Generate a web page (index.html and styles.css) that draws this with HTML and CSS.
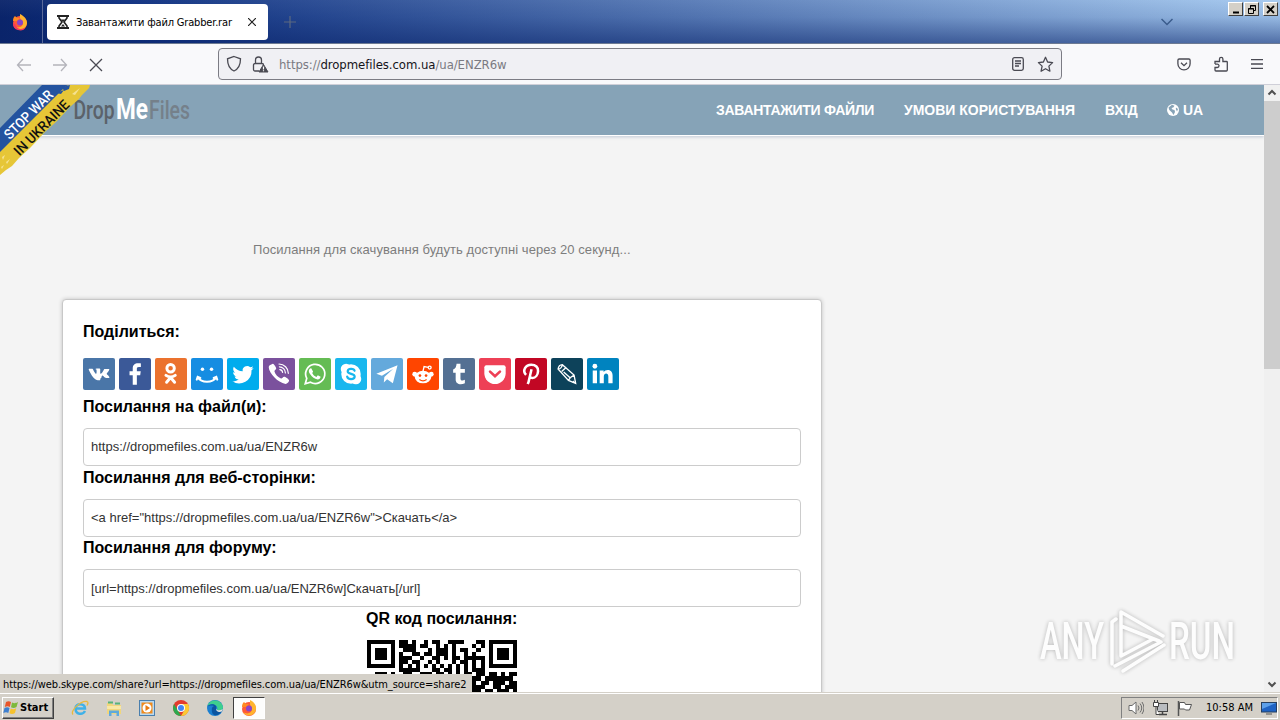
FILE: index.html
```html
<!DOCTYPE html>
<html lang="uk">

<head>
  <meta charset="UTF-8">
  <title>Завантажити файл Grabber.rar</title>
  <link rel="stylesheet" href="styles.css">
</head>

<body>

  <!-- Tab strip -->
  <div class="tabbar">
    <div class="pinned">
      <svg width="18" height="18" viewBox="0 0 18 18">
        <circle cx="9" cy="10" r="7" fill="#ff5a36"/>
        <path d="M9 1c4 2 7 5 7 9a7 7 0 0 1-13 3c4 3 9 1 9-3 0-3-2-3-3-5z" fill="#ffb42e"/>
        <path d="M2 8c0-3 1-4 2-5l2 2 3 0-3 3z" fill="#ff8a22"/>
        <circle cx="9" cy="9.500" r="3" fill="#8a45c8"/>
        <path d="M2 10a7 7 0 0 0 13 4c-4 3-9 3-11-3z" fill="#f33a5b"/>
      </svg>
    </div>
    <div class="tab">
      <svg width="12" height="14" viewBox="0 0 12 14">
        <path d="M0 1h12M0 13h12" stroke="#222" stroke-width="2"/>
        <path d="M2 1v2l3 4-3 4v2M10 1v2L7 7l3 4v2" fill="none" stroke="#222" stroke-width="1.600"/>
        <path d="M4 4.500h4L6 7zM6 9l2 2.500H4z" fill="#222"/>
      </svg>
      <span class="tab-title">Завантажити файл Grabber.rar</span>
      <svg class="tab-close" width="8" height="8" viewBox="0 0 8 8"><path d="M0 0l8 8M8 0L0 8" stroke="#222" stroke-width="1.200"/></svg>
    </div>
    <svg class="newtab" width="12" height="12" viewBox="0 0 12 12"><path d="M6 0v12M0 6h12" stroke="#5c6980" stroke-width="1.200"/></svg>
    <svg class="alltabs" width="12" height="8" viewBox="0 0 12 8"><path d="M0.500 1l5.500 5.500L11.500 1" fill="none" stroke="#3b5c8c" stroke-width="1.500"/></svg>
    <div class="winbtns">
      <span><svg width="14" height="13"><path d="M4 9.500h6" stroke="#000" stroke-width="2"/></svg></span>
      <span><svg width="14" height="13" fill="none" stroke="#000"><path d="M5.500 5V2.500h5v5H8M5 3h6M3.500 5.500h5v5h-5zM3 6h6"/></svg></span>
      <span class="last"><svg width="13" height="13"><path d="M3 3l7 7M10 3l-7 7" stroke="#000" stroke-width="1.800"/></svg></span>
    </div>
  </div>

  <!-- Toolbar -->
  <div class="toolbar">
    <div class="navbtns">
      <svg width="16" height="14" viewBox="0 0 16 14"><path d="M15 7H1.500M7 1L1.500 7 7 13" class="off"/></svg>
      <svg width="16" height="14" viewBox="0 0 16 14"><path d="M1 7h13.500M9 1l5.500 6L9 13" class="off"/></svg>
      <svg class="stop" width="14" height="14" viewBox="0 0 14 14"><path d="M1 1l12 12M13 1L1 13" class="on"/></svg>
    </div>
    <div class="urlbar">
      <svg width="16" height="18" viewBox="0 0 16 18"><path d="M8 1.500l6.500 2.300c0 6-1.500 10-6.500 12.200C3 13.800 1.500 9.800 1.500 3.800z" class="on"/></svg>
      <svg class="lock" width="17" height="17" viewBox="0 0 17 17">
        <path d="M7 15H3a1.500 1.500 0 0 1-1.500-1.500V9A1.500 1.500 0 0 1 3 7.500h7A1.500 1.500 0 0 1 11.500 9M3.500 7.500V4a3 3 0 0 1 6 0v3.500" class="on"/>
        <path d="M11.500 8.500L16 16H7z" fill="#4a4a53" stroke="#4a4a53"/>
        <path d="M11.500 10.500v3M11.500 14.300v1" stroke="#fff" stroke-width="1.200"/>
      </svg>
      <span class="url">https://<b>dropmefiles.com.ua</b>/ua/ENZR6w</span>
      <svg class="reader" width="12" height="14" viewBox="0 0 12 14"><rect x="0.700" y="0.700" width="10.600" height="12.600" rx="1.800" class="on"/><path d="M3 4h6M3 6.500h6M3 9h4" class="on"/></svg>
      <svg width="17" height="17" viewBox="0 0 17 17"><path d="M8.500 1.300l2.100 4.700 5 .6-3.700 3.500 1 5.100-4.400-2.500-4.400 2.500 1-5.100L1.400 6.600l5-.6z" class="on" stroke-linejoin="round"/></svg>
    </div>
    <div class="tools">
      <svg width="14" height="13" viewBox="0 0 14 13"><path d="M2.200 1h9.600a1.300 1.300 0 0 1 1.300 1.300v3.500a6 6 0 0 1-12.200 0V2.300A1.300 1.300 0 0 1 2.200 1zM4 4.800l3 2.900 3-2.900" class="on"/></svg>
      <svg width="14" height="16" viewBox="0 0 14 16"><path d="M1 8V5.500h4.500V3a1.700 1.700 0 0 1 3.400 0v2.500h3.600a.8.800 0 0 1 .8.800V14a1 1 0 0 1-1 1H2a1 1 0 0 1-1-1v-2.500h2.300a1.700 1.700 0 0 0 0-3.400H1" class="on"/></svg>
      <svg width="12" height="10" viewBox="0 0 12 10"><path d="M0 .6h12M0 5h12M0 9.400h12" class="on"/></svg>
    </div>
  </div>

  <!-- Page -->
  <div class="viewport">
    <div class="page">
      <header>
        <svg class="logo" width="124" height="34" viewBox="0 0 124 34">
          <g font-family="Roboto, sans-serif">
            <text x="3.500" y="25" font-size="25" font-weight="500" fill="#5b626a" textLength="41" lengthAdjust="spacingAndGlyphs">Drop</text>
            <text x="46" y="25" font-size="29" font-weight="700" fill="#fff" textLength="32" lengthAdjust="spacingAndGlyphs">Me</text>
            <text x="79" y="25" font-size="25" font-weight="500" fill="#75808a" textLength="41" lengthAdjust="spacingAndGlyphs">Files</text>
          </g>
        </svg>
        <nav>
          <a class="n1">ЗАВАНТАЖИТИ ФАЙЛИ</a>
          <a class="n2">УМОВИ КОРИСТУВАННЯ</a>
          <a class="n3">ВХІД</a>
          <a class="n4"><svg width="12" height="12" viewBox="0 0 12 12"><circle cx="6" cy="6" r="6" fill="#fff"/><path d="M5 .8l2.500 1L6.300 3.500 4.500 4l1 1.500 2 .5.500 2L6.500 11 5 8.500 2.300 6 1.500 3.500zM9 3.500l2 1.500-1 2.500L8.800 5z" fill="#86a3b7"/></svg>UA</a>
        </nav>
      </header>

      <svg class="ribbon" width="92" height="90" viewBox="0 0 92 90">
        <path d="M42 0H68L0 68V43z" fill="#24539f"/>
        <path d="M66 1l4-1h20l-1 3-7 7-3 4-9 8-13 14-12 11-15 16-11 10-7 8-6 4-6 5V67z" fill="#e6c637"/>
        <path d="M62 2l8-2-1 4-5 2zM56 8l8-3-3 4z" fill="#24539f"/>
        <path d="M2 72l3-2-2 5zM6 77l4-3-3 5zM1 82l3-2-2 4zM72 9l8-6-5 7z" fill="#f5e292"/>
        <g font-family="Roboto, sans-serif" font-size="14" font-weight="700" text-anchor="middle">
          <text transform="translate(32 33) rotate(-45)" fill="#fff" font-weight="500" textLength="63" lengthAdjust="spacingAndGlyphs">STOP WAR</text>
          <text transform="translate(45 46) rotate(-45)" fill="#111" font-weight="500" textLength="72" lengthAdjust="spacingAndGlyphs">IN UKRAINE</text>
        </g>
      </svg>

      <p class="countdown">Посилання для скачування будуть доступні через 20 секунд...</p>

      <section class="card">
        <h4 class="first">Поділиться:</h4>
        <div class="share">
          <svg class="vk" viewBox="0 0 24 24"><path d="M12.800 16.700h-.9s-2 .2-3.800-1.700C6.100 12.900 4.300 8.700 4.300 8.700s-.1-.3 0-.4c.1-.2.500-.2.500-.2l2.100 0s.2 0 .4.100c.1.100.2.300.2.300s.4.900.8 1.600c.9 1.500 1.300 1.900 1.600 1.700.4-.2.300-2.100.3-2.100s0-.7-.2-1c-.2-.2-.5-.3-.7-.3-.1 0 .1-.3.300-.4.400-.2 1-.2 1.800-.2.600 0 .8 0 1 .1.800.2.500.9.500 2.500 0 .5-.1 1.200.3 1.500.2.100.6 0 1.700-1.700.5-.8.900-1.800.9-1.800s.1-.2.200-.2h2.900s.7-.1.800.2c.1.300-.2 1-.9 2-1.200 1.600-1.400 1.500-.3 2.400 1 .9 1.200 1.400 1.200 1.400.4.700-.4.800-.4.800l-1.900 0s-.4.100-1-.3c-.7-.5-1.400-1.800-2-1.600-.5.200-.5 1.400-.5 1.400s0 .2-.2.400c-.2.200-.5.200-.5.200z"/></svg>
          <svg class="fb" viewBox="0 0 24 24"><path d="M13.400 20v-7.100h2.500l.4-3h-2.900V8.200c0-.8.300-1.400 1.500-1.400h1.500V4.100C16.100 4.100 15.200 4 14.200 4 12 4 10.300 5.300 10.300 7.800v2.100H7.900v3h2.400V20z"/></svg>
          <svg class="ok" viewBox="0 0 24 24"><g fill="none" stroke="#fff" stroke-width="2.200" stroke-linecap="round"><circle cx="11.700" cy="7.700" r="2.800"/><path d="M8.200 13c2 1.500 5 1.500 7 0M11.700 14.600l-3 3.600M11.700 14.600l3 3.600"/></g></svg>
          <svg class="mm" viewBox="0 0 24 24"><circle cx="8.600" cy="8.500" r="1.300"/><circle cx="15.400" cy="8.500" r="1.300"/><path d="M5 14.500c3 4.300 11 4.300 14 0M4.300 16.200l.7-2 2 .8M19.700 16.200l-.7-2-2 .8" fill="none" stroke="#fff" stroke-width="1.500" stroke-linecap="round"/></svg>
          <svg class="tw" viewBox="0 0 24 24"><path d="M20 7.500c-.6.300-1.200.4-1.900.5.700-.4 1.200-1 1.400-1.800-.6.400-1.300.6-2.100.8a3.300 3.300 0 0 0-5.600 3C9.100 9.900 6.700 8.600 5.100 6.600c-.9 1.500-.4 3.400 1 4.400-.5 0-1-.2-1.500-.4 0 1.600 1.100 2.900 2.600 3.200-.5.100-1 .2-1.500.1.400 1.300 1.600 2.200 3.100 2.300A6.600 6.600 0 0 1 4 17.500a9.300 9.300 0 0 0 14.400-8.300c.6-.5 1.200-1 1.600-1.700z"/></svg>
          <svg class="vb" viewBox="0 0 24 24"><path d="M5 5.500l2.400-1.200c1 .5 2.600 2.700 2.500 3.600 0 1-1.600 1.400-1.300 2.300.7 2.200 2.600 4.500 4.900 5.200 1 .2 1.300-1.300 2.300-1.300 1 0 3.300 1.600 3.700 2.600.3.900-1.300 2.800-2.600 2.800C11 18.500 4.600 11.500 4.300 7c0-.6.200-1.100.7-1.500z"/><path d="M12 4.500a7 7 0 0 1 7 7M12.300 6.600a4.700 4.700 0 0 1 4.500 4.600M12.600 8.700c1.300.1 2 .9 2.100 2.100" fill="none" stroke="#fff" stroke-width=".9" stroke-linecap="round"/></svg>
          <svg class="wa" viewBox="0 0 24 24"><path d="M4.700 19.300l1.100-4a7.200 7.200 0 1 1 2.800 2.900z" fill="none" stroke="#fff" stroke-width="1.300"/><path d="M9.300 7.800c-.3-.2-1-.1-1.400.4-1 1.200-.4 2.800.5 4 1.500 2.100 3.200 3.500 5.500 3.900 1.100.1 2.200-.7 2.300-2l-2.100-1.100-1 1.200c-1.500-.5-2.500-1.500-3.200-2.900l.7-1z"/></svg>
          <svg class="sk" viewBox="0 0 24 24"><circle cx="12" cy="12" r="7.300"/><circle cx="8.300" cy="8.300" r="4"/><circle cx="15.700" cy="15.700" r="4"/><path d="M14.700 9.600C14.200 7.600 9.600 7.700 9.500 9.900c-.1 2.500 5.400 1.500 5.300 4.100-.2 2.500-5.300 2.400-5.700-.1" fill="none" stroke="#18b7ee" stroke-width="1.600" stroke-linecap="round"/></svg>
          <svg class="tg" viewBox="0 0 24 24"><path d="M19.900 5.500L4 11.800l4.200 1.500 8.500-5.200-6.700 6.200-.4 4 2.500-2.300 4.300 3z"/></svg>
          <svg class="rd" viewBox="0 0 24 24"><ellipse cx="12" cy="14.300" rx="6.200" ry="4.700"/><circle cx="5.800" cy="12.200" r="1.800"/><circle cx="18.200" cy="12.200" r="1.800"/><path d="M12 10l.8-3.600 3.200.6" fill="none" stroke="#fff"/><circle cx="17" cy="7.200" r="1.100" fill="none" stroke="#fff"/><g fill="#ff4500"><circle cx="9.700" cy="13.200" r="1"/><circle cx="14.300" cy="13.200" r="1"/></g><path d="M9.300 16.200c1.500 1.100 3.900 1.100 5.400 0" fill="none" stroke="#ff4500" stroke-width=".9"/></svg>
          <svg class="tm" viewBox="0 0 24 24"><path d="M10.200 4.300h2.900v4h3.300v2.800h-3.300v4.200c0 1.600 1.300 1.900 3.300 1v2.700c-3.200 1.500-6.900.8-6.900-2.800v-5.100H7.600V8.700c1.600-.6 2.300-1.700 2.600-4.400z"/></svg>
          <svg class="pk" viewBox="0 0 24 24"><path d="M5.500 5.500h13A1.600 1.600 0 0 1 20 7v4.500a8 8 0 0 1-16 0V7a1.600 1.600 0 0 1 1.500-1.500z"/><path d="M8.300 10.200l3.700 3.500 3.700-3.500" fill="none" stroke="#ee4056" stroke-width="2" stroke-linecap="round"/></svg>
          <svg class="pn" viewBox="0 0 24 24"><path d="M8.300 12.700C5.200 9.500 8 5 12.200 5c3.300 0 5.300 2 5.100 4.800-.2 3-2 5.200-4.200 5.200-1 0-1.600-.5-1.800-1.100M12.400 8.500l-2.300 9.800-.6 1.200" fill="none" stroke="#fff" stroke-width="1.900"/></svg>
          <svg class="lj" viewBox="0 0 24 24"><path d="M5.300 8.300c.3-2 1.400-3.200 3.200-3.300l8.800 7.800 1.200 6.200-5.400-2.200zM5.500 8.300c1.600-.2 2.600-1.500 3-3.200M8 10.200l3.500-3.300M9.500 10.500l5 4.500M13.100 16.800c1-2 2.400-3.200 4.200-4" fill="none" stroke="#fff" stroke-width="1"/><path d="M17 16.800l1.500 2.200-2.800-.8z"/></svg>
          <svg class="li" viewBox="0 0 24 24"><path d="M4.300 9.300h3.200v9.700H4.300zM9.500 9.300h3v1.400c1.300-2.400 6.700-2.500 6.700 2.400V19H16v-5.200c0-3-3.400-2.700-3.400 0V19H9.500z"/><circle cx="5.900" cy="6.200" r="1.800"/></svg>
        </div>
        <h4 class="second">Посилання на файл(и):</h4>
        <div class="field f1">https://dropmefiles.com.ua/ua/ENZR6w</div>
        <h4>Посилання для веб-сторінки:</h4>
        <div class="field f2">&lt;a href="https://dropmefiles.com.ua/ua/ENZR6w"&gt;Скачать&lt;/a&gt;</div>
        <h4 class="forum">Посилання для форуму:</h4>
        <div class="field f3">[url=https://dropmefiles.com.ua/ua/ENZR6w]Скачать[/url]</div>
        <div class="qr">
          <h4>QR код посилання:</h4>
          <svg id="qr" width="150" height="150" viewBox="0 0 37 37" shape-rendering="crispEdges"></svg>
        </div>
      </section>

      <svg class="watermark" width="204" height="72" viewBox="0 0 204 72">
        <g font-family="Roboto, sans-serif" font-size="51" font-weight="500" fill="#fff">
          <text x="3" y="53" textLength="64" lengthAdjust="spacingAndGlyphs">ANY</text>
          <text x="132" y="53" textLength="66" lengthAdjust="spacingAndGlyphs">RUN</text>
        </g>
        <path d="M75 58V16l4-3M84 50V6l42 24M84 20l38 15M84 50l32-17M78 60l46-24M86 65l41-26" fill="none" stroke="#fff" stroke-width="3.500" stroke-linecap="round" stroke-linejoin="round"/>
      </svg>
    </div>
    <div class="scrollbar">
      <svg width="16" height="16" viewBox="0 0 16 16"><path d="M4.500 9.500L8 6l3.500 3.500" fill="none" stroke="#505050" stroke-width="2"/></svg>
      <div class="thumb"></div>
      <svg class="down" width="16" height="16" viewBox="0 0 16 16"><path d="M4.500 6.500L8 10l3.500-3.500" fill="none" stroke="#505050" stroke-width="2"/></svg>
    </div>
    <div class="status">https://web.skype.com/share?url=https://dropmefiles.com.ua/ua/ENZR6w&amp;utm_source=share2</div>
  </div>

  <!-- Taskbar -->
  <div class="taskbar">
    <div class="start">
      <svg width="17" height="16" viewBox="0 0 17 16">
        <path d="M3 2c2-1.200 3.500-1 5 0L6.800 7c-1.500-1-3-1-5 0z" fill="#e8552a"/>
        <path d="M9 2.500c2 1 3.500 1 6-.5l-1.500 5c-2 1.300-3.700 1.300-5.500.3z" fill="#7db93b"/>
        <path d="M1.500 8c2-1.200 3.500-1 5 0L5.300 13c-1.500-1-3-1-5 0z" fill="#3d7fd0"/>
        <path d="M7.700 8.500c2 1 3.500 1 5.500-.3L12 13c-2 1.300-3.700 1.300-5.500.3z" fill="#f6c22d"/>
      </svg>
      <span>Start</span>
    </div>
    <div class="quick">
      <svg width="18" height="18" viewBox="0 0 18 18"><path d="M14 12c-2.500 4.500-9.500 3.500-9.500-2.500S14 4 14 9.500H5" fill="none" stroke="#3fb1e8" stroke-width="2.500"/><path d="M2 15.500C-1 12 10 1 16 2.500c1.500.500 1 2.500 0 4" fill="none" stroke="#e9b93c" stroke-width="1.300"/></svg>
      <svg width="18" height="18" viewBox="0 0 18 18"><path d="M2 4h5l1 2h8v9H2z" fill="#f1d67c"/><path d="M3 2.500h5v2H3zM10 3.500h5v2h-5z" fill="#58b37a"/><path d="M2 7h14v3H2z" fill="#f8e7a6"/><path d="M4 17v-5.500h10V17h-2.500v-3h-5v3z" fill="#5ea9dc"/></svg>
      <svg width="18" height="18" viewBox="0 0 18 18"><rect x="1.500" y="1.500" width="15" height="15" fill="#b9d9f1" stroke="#4a7fae"/><rect x="3.500" y="3.500" width="11" height="11" fill="#f08a1c"/><circle cx="9" cy="9" r="4.500" fill="#fff"/><path d="M7.500 6l4.500 3-4.500 3z" fill="#e87a10"/></svg>
      <svg width="18" height="18" viewBox="0 0 18 18"><circle cx="9" cy="9" r="8" fill="#e33b2e"/><path d="M2.100 5l5 8.500L9 17A8 8 0 0 1 2.100 5z" fill="#2da94f"/><path d="M9 5h7A8 8 0 0 1 9 17l3.500-6z" fill="#fcc934"/><circle cx="9" cy="9" r="4" fill="#fff"/><circle cx="9" cy="9" r="3" fill="#4285f4"/></svg>
      <svg width="18" height="18" viewBox="0 0 18 18"><circle cx="9" cy="9" r="8" fill="#1b7fd0"/><path d="M1.500 7C3 0 15-1 17 8c.300 4-5 4-6 2.500C13 7 6 3 1.500 7z" fill="#3ecf8e"/><path d="M1.300 7.500C5 3 12 6 10 9c0 3 3 4 6 3-3 5-9 6-10 1-.500-4 0-5 2-6-3-1-5 0-6.700.500z" fill="#0b54a0"/><path d="M10 9.500c.500 2 4 2.500 6.800.500l-1 2.500c-3 1.200-6 0-5.800-3z" fill="#e6e3dd"/></svg>
      <div class="active">
        <svg width="18" height="18" viewBox="0 0 18 18"><circle cx="9" cy="10" r="7" fill="#ff5a36"/><path d="M10 1c4 2 6.500 5 6 9a7 7 0 0 1-13 3c4 3 9 1 9-3 0-3-2-3-2-5z" fill="#ffb42e"/><path d="M2 8c0-3 1-4 2-5l2 2h3L6 8z" fill="#ff8a22"/><circle cx="9" cy="9.500" r="3" fill="#8a45c8"/></svg>
      </div>
    </div>
    <div class="tray">
      <svg width="16" height="16" viewBox="0 0 16 16" stroke="#6b6b6b"><path d="M1 5.500h3L8 2v12l-4-3.500H1z" fill="#fff"/><path d="M10 5.500q2 2.500 0 5M12 3.500q3.500 4.500 0 9M14 2q4 6 0 12" fill="none"/></svg>
      <svg width="17" height="16" viewBox="0 0 17 16" stroke="#444"><rect x="5.500" y="3.500" width="10" height="8" fill="#b9bcc0"/><path d="M7 14.500h8M10.500 12v2" stroke-width="1.500"/><path d="M1.500 2.500h5v4h-5zM2.500 0v2M5.500 0v2M4 7v7.500h3" fill="#fff"/></svg>
      <svg width="16" height="16" viewBox="0 0 16 16" stroke="#555"><path d="M1.500 1v15" stroke-width="1.500"/><path d="M2.500 2.500h5l1 2h6l-2 5.500h-4l-1-1h-5z" fill="#fff"/></svg>
      <span class="clock">10:58 AM</span>
      <svg width="16" height="14" viewBox="0 0 16 14"><rect x=".5" y="1.500" width="15" height="9.500" fill="#1f63c4" stroke="#274060"/><path d="M1 2h14L1 8z" fill="#5da0ea"/><path d="M5 13h6" stroke="#555"/></svg>
    </div>
  </div>

  <script>
    // first rows of the code, the rest is below the fold
    const rows = [
      "XXXXXXX.XX.X..X.XX..XXXX...XX.XXXXXXX",
      "X.....X.XXXX.XX..X.X.X....X.X.X.....X",
      "X.XXX.X..XXX...X.XXX.X.XX..X..X.XXX.X",
      "X.XXX.X.X..XX.XX.XXX.X..X.X...X.XXX.X",
      "X.XXX.X.XXX..X..XX.X.XX.XXXXX.X.XXX.X",
      "X.....X.XX.XX..X.X...X.XX.X.X.X.....X",
      "XXXXXXX.X.X.X.X.X.X.X.X.X.X.X.XXXXXXX",
      "........XXXXX...XX.XX.X.X.XXX........",
      "..XXX.X..XX..XXX.XX.X.X.XX.XX.XX.X.XX",
      "X.X..X...XX.X..X.XX..X...XXX.XXXXXXX.",
      "..XX.XX.X...XX..XX.X..X.X.X.XX.XXX.XX",
      "X..X.XX.XX.X..X..X.X.X..X.XXX..XX.XXX",
      "XX..X..X..XX.X.XX..X.XX...XX.XX.XXX.X"
    ];
    let cells = '';
    rows.forEach((row, y) => {
      for (let x = 0; x < row.length; x++) {
        if (row[x] === 'X') cells += `<rect x="${x}" y="${y}" width="1" height="1"/>`;
      }
    });
    document.getElementById('qr').innerHTML = cells;
  </script>
</body>

</html>
```
FILE: styles.css
```css
* {
  margin: 0;
  padding: 0;
  box-sizing: border-box;
}

body {
  width: 1280px;
  height: 720px;
  overflow: hidden;
  display: flex;
  flex-direction: column;
  font-family: "Liberation Sans", Arial, sans-serif;
  background: #f4f4f4;
}

svg {
  display: block;
  flex: none;
}

.on,
.off {
  fill: none;
  stroke: #4a4a53;
  stroke-width: 1.3;
}

.off {
  stroke: #b4b4bb;
}

/* Tab strip */
.tabbar {
  position: relative;
  flex: none;
  height: 44px;
  display: flex;
  align-items: center;
  background: linear-gradient(rgba(255, 255, 255, 0.04), rgba(10, 36, 106, 0.1) 40%, rgba(10, 36, 106, 0.55)), linear-gradient(90deg, #0a246a, #0e3080 10%, #a6caf0);
  border-bottom: 1px solid #6d7a92;
}

.pinned {
  width: 43px;
  height: 43px;
  padding: 13px 0 0 11px;
  border-right: 1px solid #5a6a9a;
}

.tab {
  width: 221px;
  height: 36px;
  margin-left: 4px;
  padding-left: 10px;
  display: flex;
  align-items: center;
  background: #fff;
  border-radius: 4px;
}

.tab-title {
  margin-left: 7px;
  width: 158px;
  padding-top: 2px;
  font: 11px "DejaVu Sans Condensed", sans-serif;
  letter-spacing: -0.17px;
  white-space: nowrap;
}

.tab-close {
  margin-left: 14px;
}

.newtab {
  margin-left: 16px;
}

.alltabs {
  margin-left: 865px;
}

.winbtns {
  position: absolute;
  top: 2px;
  right: 2px;
  display: flex;
}

.winbtns span {
  width: 15px;
  height: 14px;
  background: #d4d0c8;
  border: 1px solid;
  border-color: #fff #404040 #404040 #fff;
  margin-right: 1px;
}

.winbtns .last {
  margin: 0 0 0 3px;
}

/* Toolbar */
.toolbar {
  flex: none;
  height: 41px;
  display: flex;
  align-items: center;
  background: #f9f9fb;
  border-bottom: 1px solid #cfcfd8;
}

.navbtns {
  display: flex;
  width: 218px;
  gap: 20px;
  padding: 1px 0 0 16px;
}

.stop {
  margin-left: 1px;
}

.urlbar {
  width: 844px;
  height: 32px;
  padding: 0 7px;
  display: flex;
  align-items: center;
  background: #f0f0f4;
  border: 1px solid #7c7c84;
  border-radius: 4px;
}

.lock {
  margin-left: 10px;
}

.url {
  flex: 1;
  margin-left: 10px;
  font: 13px "DejaVu Sans Condensed", sans-serif;
  letter-spacing: -0.06px;
  color: #7a7a82;
}

.url b {
  font-weight: normal;
  color: #15141a;
}

.reader {
  margin-right: 13px;
}

.tools {
  display: flex;
  align-items: center;
  gap: 23px;
  margin-left: 115px;
}

/* Page */
.viewport {
  position: relative;
  flex: none;
  height: 607px;
  display: flex;
  overflow: hidden;
}

.page {
  position: relative;
  width: 1264px;
  height: 607px;
  overflow: hidden;
}

header {
  height: 51px;
  display: flex;
  background: #86a3b7;
  border-bottom: 1px solid #fff;
  box-shadow: 0 1px 3px rgba(120, 140, 170, 0.4);
}

.logo {
  margin: 9px 0 0 70px;
}

nav {
  display: flex;
  margin-left: 522px;
  gap: 30px;
  line-height: 50px;
  font-size: 14px;
  font-weight: bold;
  color: #fff;
  white-space: nowrap;
}

nav a {
  display: flex;
  align-items: center;
}

.n1 {
  width: 158px;
  letter-spacing: -0.3px;
}

.n2 {
  width: 171px;
}

.n3 {
  width: 32px;
}

.n4 {
  gap: 4px;
}

.ribbon {
  position: absolute;
  top: 0;
  left: 0;
  overflow: visible;
}

.countdown {
  margin: 104px 0 0 253px;
  height: 20px;
  line-height: 20px;
  font-size: 13px;
  letter-spacing: 0.07px;
  color: #7d7d7d;
  white-space: nowrap;
}

.card {
  width: 760px;
  height: 480px;
  margin: 39px 0 0 62px;
  padding: 21px 20px;
  background: #fff;
  border: 1px solid #c8c8c8;
  border-radius: 4px;
  box-shadow: 0 0 4px rgba(0, 0, 0, 0.2);
}

h4 {
  margin: 2px 0 11px;
  line-height: 20px;
  font-size: 16px;
  color: #000;
}

h4.first {
  margin: 1px 0 16px;
}

h4.second {
  margin: 7px 0 11px;
}

h4.forum {
  margin: 1px 0 11px;
}

.share {
  display: flex;
  gap: 4px;
}

.share svg {
  width: 32px;
  height: 32px;
  border-radius: 2px;
  fill: #fff;
}

.vk { background: #4a76a8; }
.fb { background: #3b5998; }
.ok { background: #eb722e; }
.mm { background: #168de2; }
.tw { background: #00aced; }
.vb { background: #7b519d; }
.wa { background: #65bc54; }
.sk { background: #18b7ee; }
.tg { background: #64a9dc; }
.rd { background: #ff4500; }
.tm { background: #547093; }
.pk { background: #ee4056; }
.pn { background: #c20724; }
.lj { background: #0d425a; }
.li { background: #0083bf; }

.field {
  width: 718px;
  height: 38px;
  padding-left: 7px;
  line-height: 36px;
  border: 1px solid #ccc;
  border-radius: 4px;
  font-size: 13px;
  color: #333;
}

.f3 {
  line-height: 38px;
}

.qr {
  width: 152px;
  margin-left: 283px;
  white-space: nowrap;
}

.qr svg {
  margin-left: 1px;
}

.watermark {
  position: absolute;
  left: 1037px;
  top: 521px;
  opacity: 0.85;
  filter: drop-shadow(0 0 2px rgba(0, 0, 0, 0.3));
}

/* Scrollbar */
.scrollbar {
  width: 16px;
  height: 607px;
  display: flex;
  flex-direction: column;
  background: #f0f0f0;
}

.thumb {
  height: 268px;
  background: #cdcdcd;
}

.down {
  margin-top: auto;
}

.status {
  position: absolute;
  left: 0;
  bottom: 0;
  width: 472px;
  height: 18px;
  padding: 4px 0 0 3px;
  background: #d4d0c8;
  font: 11px "DejaVu Sans Condensed", sans-serif;
  letter-spacing: -0.09px;
  white-space: nowrap;
}

/* Taskbar */
.taskbar {
  height: 28px;
  display: flex;
  align-items: center;
  background: #d4d0c8;
  box-shadow: inset 0 1px #d4d0c8, inset 0 2px #fff;
  padding: 3px 2px 0;
}

.start {
  width: 52px;
  height: 22px;
  display: flex;
  align-items: center;
  border: 1px solid;
  border-color: #fff #404040 #404040 #fff;
  box-shadow: inset -1px -1px #808080;
  font: bold 11px "DejaVu Sans Condensed", sans-serif;
}

.quick {
  display: flex;
  align-items: center;
  gap: 15.700px;
  margin-left: 17px;
}

.active {
  width: 32px;
  height: 22px;
  margin-left: -6px;
  padding: 1px 6px;
  background: #fdfdfc;
  border: 1px solid;
  border-color: #404040 #fff #fff #404040;
}

.tray {
  width: 157px;
  height: 22px;
  margin-left: auto;
  padding-left: 6px;
  display: flex;
  align-items: center;
  gap: 8px;
  border: 1px solid;
  border-color: #808080 #fff #fff #808080;
}

.clock {
  width: 47px;
  margin-left: 5px;
  font: 11px "DejaVu Sans Condensed", sans-serif;
  white-space: nowrap;
}
```
